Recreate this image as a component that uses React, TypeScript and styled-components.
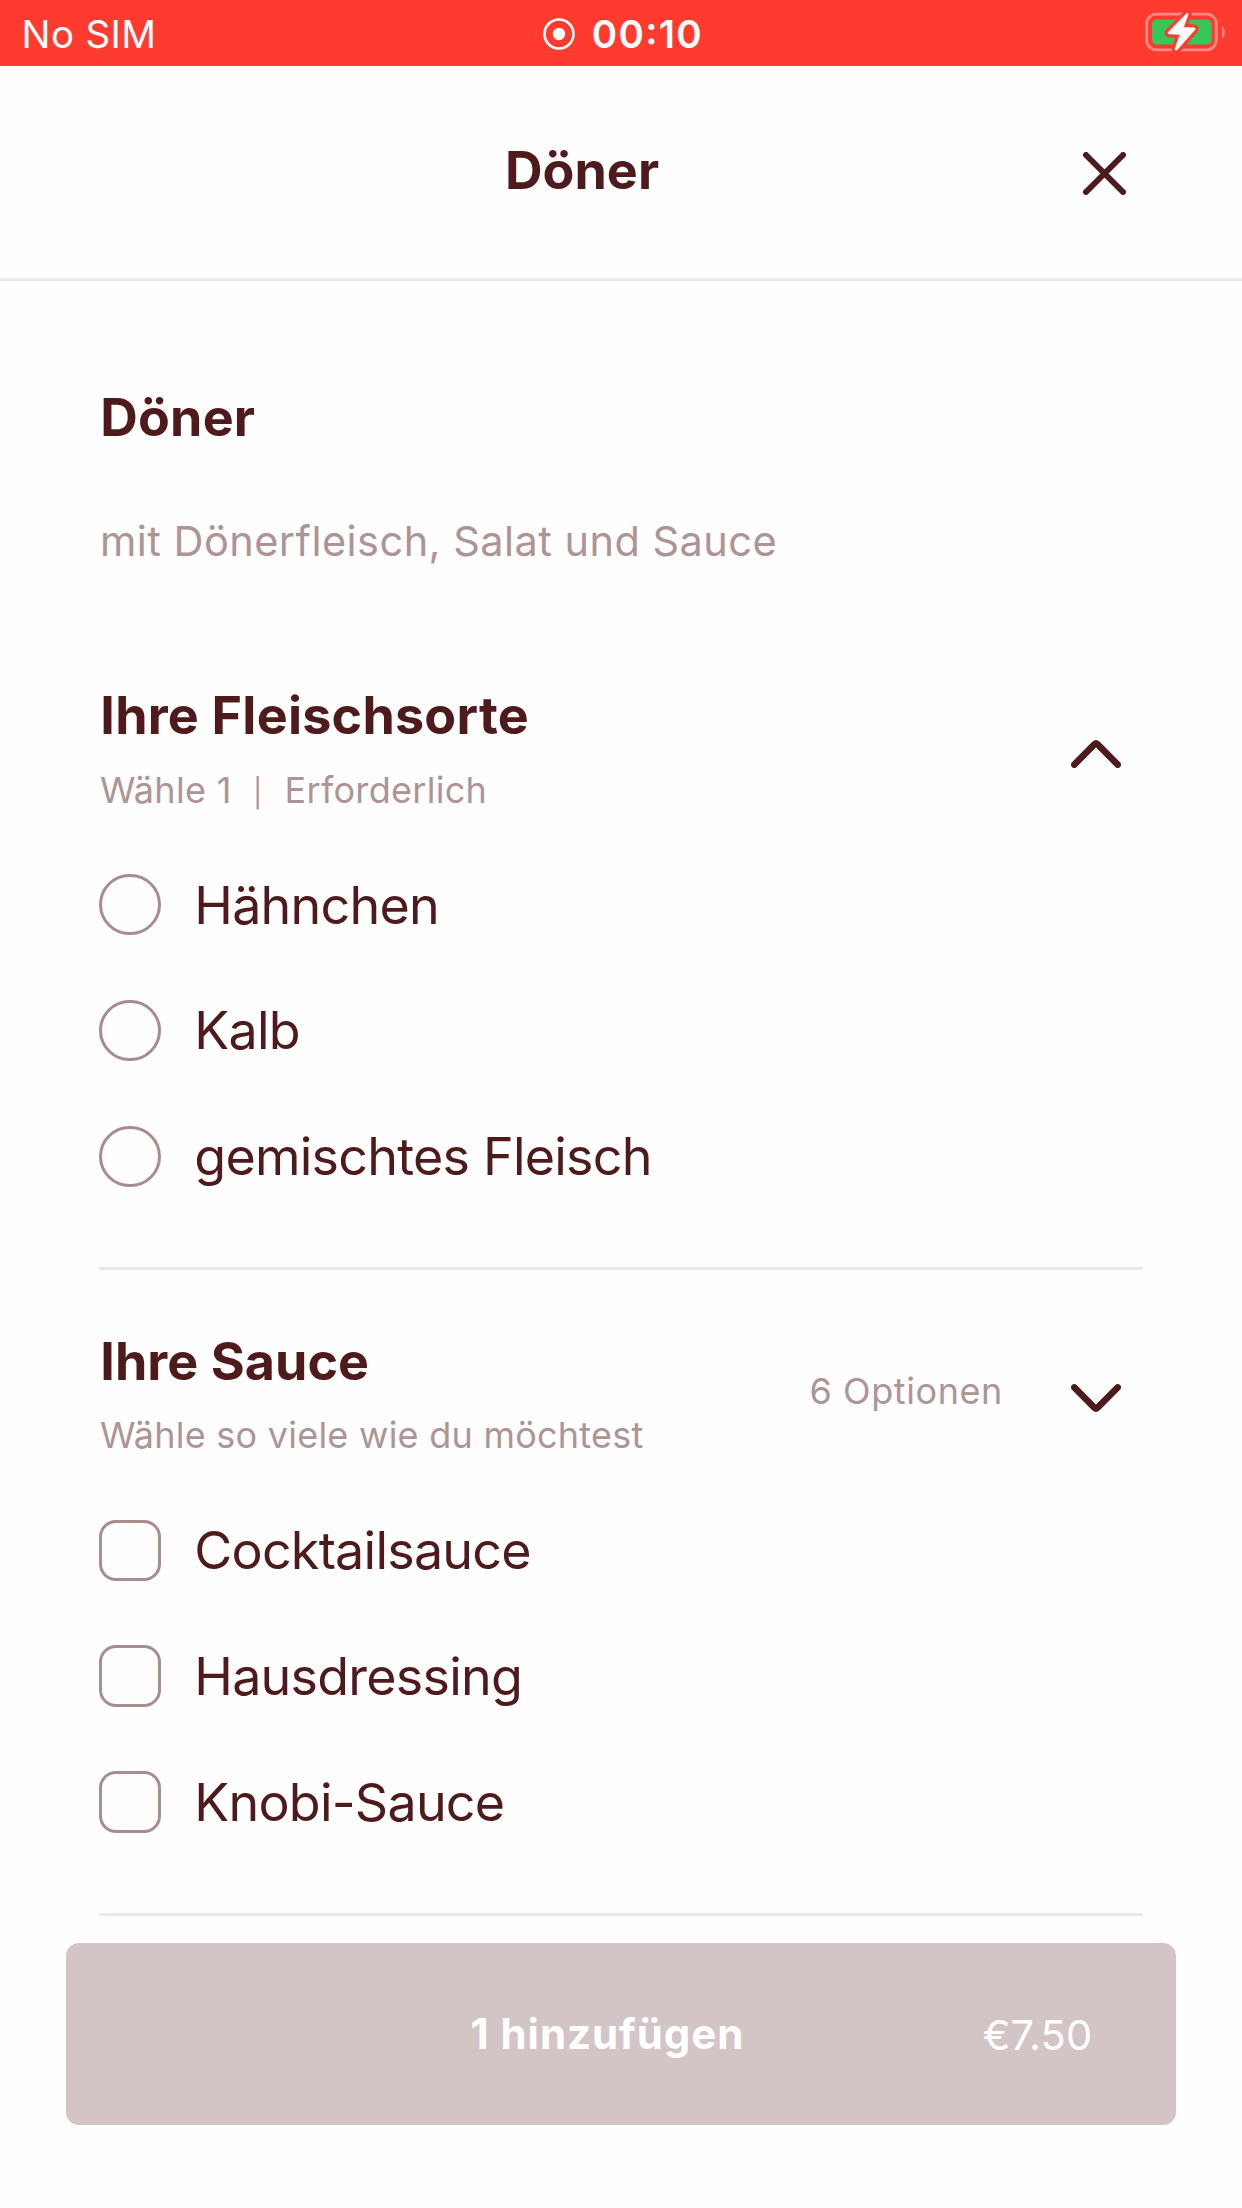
import React, { useState } from 'react';
import styled, { createGlobalStyle } from 'styled-components';

const ink = '#4e1a1b';
const muted = '#ad9495';
const line = '#ece8e8';

const GlobalStyle = createGlobalStyle`
  *, *::before, *::after { box-sizing: border-box; }
  body { margin: 0; background: #fff; }
  button { font: inherit; border: 0; background: none; padding: 0; margin: 0; }
`;

const Screen = styled.div`
  display: flex;
  flex-direction: column;
  width: 1242px;
  height: 2208px;
  overflow: hidden;
  background: #fefefe;
  color: ${ink};
  font-family: Inter, 'Liberation Sans', sans-serif;
  white-space: pre;
`;

const StatusBar = styled.header`
  display: grid;
  grid-template-columns: 1fr auto 1fr;
  align-items: center;
  height: 66.3px;
  flex: none;
  padding: 2px 15.5px 0 19.8px;
  background: #ff3b30;
  color: #fff;
  font-size: 38.5px;
  line-height: 46px;
`;

const Carrier = styled.span`
  padding-left: 1.8px;
  letter-spacing: 0.35px;
`;

const Recording = styled.div`
  display: flex;
  align-items: center;
  gap: 16.5px;
`;

const Clock = styled.span`
  font-weight: 580;
  letter-spacing: 1.3px;
  font-feature-settings: 'case';
`;

const BatterySlot = styled.div`
  display: flex;
  justify-content: flex-end;
  margin-top: -3.4px;
`;

const TitleBar = styled.div`
  display: grid;
  grid-template-columns: 1fr auto 1fr;
  align-items: center;
  flex: none;
  height: 215.2px;
  padding: 0 116px 3px 38px;
  border-bottom: 3.4px solid ${line};
`;

const Title = styled.h1`
  grid-column: 2;
  margin: 0;
  font-size: 52px;
  font-weight: 700;
  line-height: 64px;
  letter-spacing: 0.05px;
`;

const CloseButton = styled.button`
  display: flex;
  justify-self: end;
  margin-top: 5px;
  color: ${ink};
`;

const Content = styled.main`
  display: flex;
  flex-direction: column;
  flex: none;
  padding: 105px 99.3px 0;
`;

const Heading = styled.h2<{ $tracking?: number }>`
  margin: 0;
  padding-left: 1px;
  font-size: 52px;
  font-weight: 700;
  line-height: 64px;
  letter-spacing: ${(p) => p.$tracking ?? 0}px;
`;

const Description = styled.p`
  margin: 66px 0 58px;
  padding-left: 0.7px;
  color: ${muted};
  font-size: 41.5px;
  line-height: 50px;
  letter-spacing: 0.46px;
`;

const Group = styled.section`
  display: flex;
  flex-direction: column;
  height: 645.7px;
  padding-top: 60px;
  border-bottom: 3.4px solid ${line};
`;

const GroupHeader = styled.div`
  display: flex;
  align-items: center;
  padding-right: 21.3px;
`;

const GroupTitles = styled.div`
  display: flex;
  flex-direction: column;
  flex: 1;
  gap: 19.2px;
`;

const Hint = styled.span<{ $tracking: number }>`
  color: ${muted};
  font-size: 36px;
  line-height: 44px;
  letter-spacing: ${(p) => p.$tracking}px;
`;

const HintLine = styled(Hint)`
  padding-left: 0.6px;
`;

const Bar = styled.span`
  margin: 0 1px 0 0.6px;
  font-size: 28px;
  line-height: 1;
`;

const Count = styled(Hint)`
  margin: -6px -1px 0 0;
`;

const Toggle = styled.button<{ $drop: number }>`
  display: flex;
  margin-left: 69.5px;
  padding-top: ${(p) => p.$drop}px;
  color: ${ink};
`;

const Options = styled.div`
  display: flex;
  flex-direction: column;
  margin-top: 30px;
`;

const Option = styled.label`
  display: flex;
  align-items: center;
  height: 125.85px;
  gap: 33.5px;
`;

const Control = styled.input<{ $round: boolean }>`
  appearance: none;
  flex: none;
  width: 61.5px;
  height: 61.5px;
  margin: 0;
  border: 3px solid #a98c8d;
  border-radius: ${(p) => (p.$round ? '50%' : '17px')};
  &:checked { background: ${ink}; box-shadow: inset 0 0 0 10px #fff; }
`;

const OptionName = styled.span`
  padding-top: 2px;
  font-size: 52px;
  line-height: 64px;
  letter-spacing: -0.77px;
`;

const Footer = styled.footer`
  display: flex;
  margin-top: auto;
  padding: 0 66.3px 82.7px 66.2px;
`;

const AddButton = styled.button`
  display: flex;
  align-items: center;
  flex: 1;
  height: 182.6px;
  padding: 2.5px 83.3px 0 166px;
  border-radius: 13px;
  background: #d3c5c5;
  color: #fff;
  font-size: 41.5px;
  line-height: 50px;
`;

const AddLabel = styled.span`
  flex: 1;
  text-align: center;
  font-size: 42px;
  font-weight: 700;
  letter-spacing: 0.95px;
  margin-top: -3px;
`;

const Price = styled.span`
  letter-spacing: 0.19px;
`;

const RecordIcon = () => (
  <svg width="32" height="32" viewBox="0 0 32 32" fill="none">
    <circle cx="16" cy="16" r="14.5" stroke="#fff" strokeWidth="2.6" />
    <circle cx="16" cy="16" r="6.2" fill="#fff" />
  </svg>
);

const bolt =
  'M41.6 4.6 L23.4 23.2 Q22.4 24.8 24.2 24.9 L35 25.4 L30 40.2 Q30.4 42.2 32 41 L50 20.6 Q50.8 18.9 49 18.8 L38.4 18.4 L43.2 5.4 Q43 3.6 41.6 4.6 Z';

const BatteryIcon = () => (
  <svg width="82" height="46" viewBox="0 0 82 46" fill="none">
    <rect x="1.7" y="5.2" width="69.6" height="35.6" rx="9.5" stroke="#ff8982" strokeWidth="2.8" />
    <path d="M77 17 Q79.7 18.5 79.7 23.2 Q79.7 28 77 29.5 Z" fill="#ff8982" />
    <rect x="7" y="10.6" width="59.6" height="25" rx="5" fill="#34c759" />
    <path d={bolt} stroke="#ff3b30" strokeWidth="7" strokeLinejoin="round" fill="#ff3b30" />
    <path d={bolt} fill="#fff" stroke="#fff" strokeWidth="0.6" />
  </svg>
);

const CloseIcon = () => (
  <svg width="43" height="43" viewBox="0 0 43 43" fill="none">
    <path d="M3 3 L40 40 M40 3 L3 40" stroke="currentColor" strokeWidth="6" strokeLinecap="round" />
  </svg>
);

const ChevronIcon = ({ open }: { open: boolean }) => (
  <svg width="50" height="28" viewBox="0 0 50 28" fill="none">
    <path
      d={open ? 'M3.3 24.6 L23.6 4.2 Q25 2.9 26.4 4.2 L46.7 24.6' : 'M3.3 3.4 L23.6 23.8 Q25 25.1 26.4 23.8 L46.7 3.4'}
      stroke="currentColor"
      strokeWidth="6.6"
      strokeLinecap="round"
      strokeLinejoin="round"
    />
  </svg>
);

type GroupData = {
  title: string;
  titleTracking: number;
  hints: string[];
  hintTracking: number;
  count?: string;
  single: boolean;
  open: boolean;
  options: string[];
};

const groups: GroupData[] = [
  {
    title: 'Ihre Fleischsorte',
    titleTracking: 0.23,
    hints: ['Wähle 1', 'Erforderlich'],
    hintTracking: 0.3,
    single: true,
    open: true,
    options: ['Hähnchen', 'Kalb', 'gemischtes Fleisch'],
  },
  {
    title: 'Ihre Sauce',
    titleTracking: 0.05,
    hints: ['Wähle so viele wie du möchtest'],
    hintTracking: 0.24,
    count: '6 Optionen',
    single: false,
    open: false,
    options: ['Cocktailsauce', 'Hausdressing', 'Knobi-Sauce'],
  },
];

function OptionGroup({ group }: { group: GroupData }) {
  const [picked, setPicked] = useState<string[]>([]);
  const toggle = (name: string) =>
    setPicked((now) =>
      group.single ? [name] : now.includes(name) ? now.filter((n) => n !== name) : [...now, name],
    );

  return (
    <Group>
      <GroupHeader>
        <GroupTitles>
          <Heading $tracking={group.titleTracking}>{group.title}</Heading>
          <HintLine $tracking={group.hintTracking}>
            {group.hints.map((text, i) => (
              <React.Fragment key={text}>
                {i > 0 && <>{'  '}<Bar>|</Bar>{'  '}</>}
                {text}
              </React.Fragment>
            ))}
          </HintLine>
        </GroupTitles>
        {group.count && <Count $tracking={0.58}>{group.count}</Count>}
        <Toggle $drop={group.open ? 12 : 9} aria-label={group.title}>
          <ChevronIcon open={group.open} />
        </Toggle>
      </GroupHeader>
      <Options>
        {group.options.map((name) => (
          <Option key={name}>
            <Control
              $round={group.single}
              type={group.single ? 'radio' : 'checkbox'}
              checked={picked.includes(name)}
              onChange={() => toggle(name)}
            />
            <OptionName>{name}</OptionName>
          </Option>
        ))}
      </Options>
    </Group>
  );
}

export default function App() {
  return (
    <>
      <GlobalStyle />
      <Screen>
        <StatusBar>
          <Carrier>No SIM</Carrier>
          <Recording>
            <RecordIcon />
            <Clock>00:10</Clock>
          </Recording>
          <BatterySlot>
            <BatteryIcon />
          </BatterySlot>
        </StatusBar>
        <TitleBar>
          <Title>Döner</Title>
          <CloseButton aria-label="Schließen">
            <CloseIcon />
          </CloseButton>
        </TitleBar>
        <Content>
          <Heading $tracking={0.18}>Döner</Heading>
          <Description>mit Dönerfleisch, Salat und Sauce</Description>
          {groups.map((group) => (
            <OptionGroup key={group.title} group={group} />
          ))}
        </Content>
        <Footer>
          <AddButton>
            <AddLabel>1 hinzufügen</AddLabel>
            <Price>€7.50</Price>
          </AddButton>
        </Footer>
      </Screen>
    </>
  );
}
